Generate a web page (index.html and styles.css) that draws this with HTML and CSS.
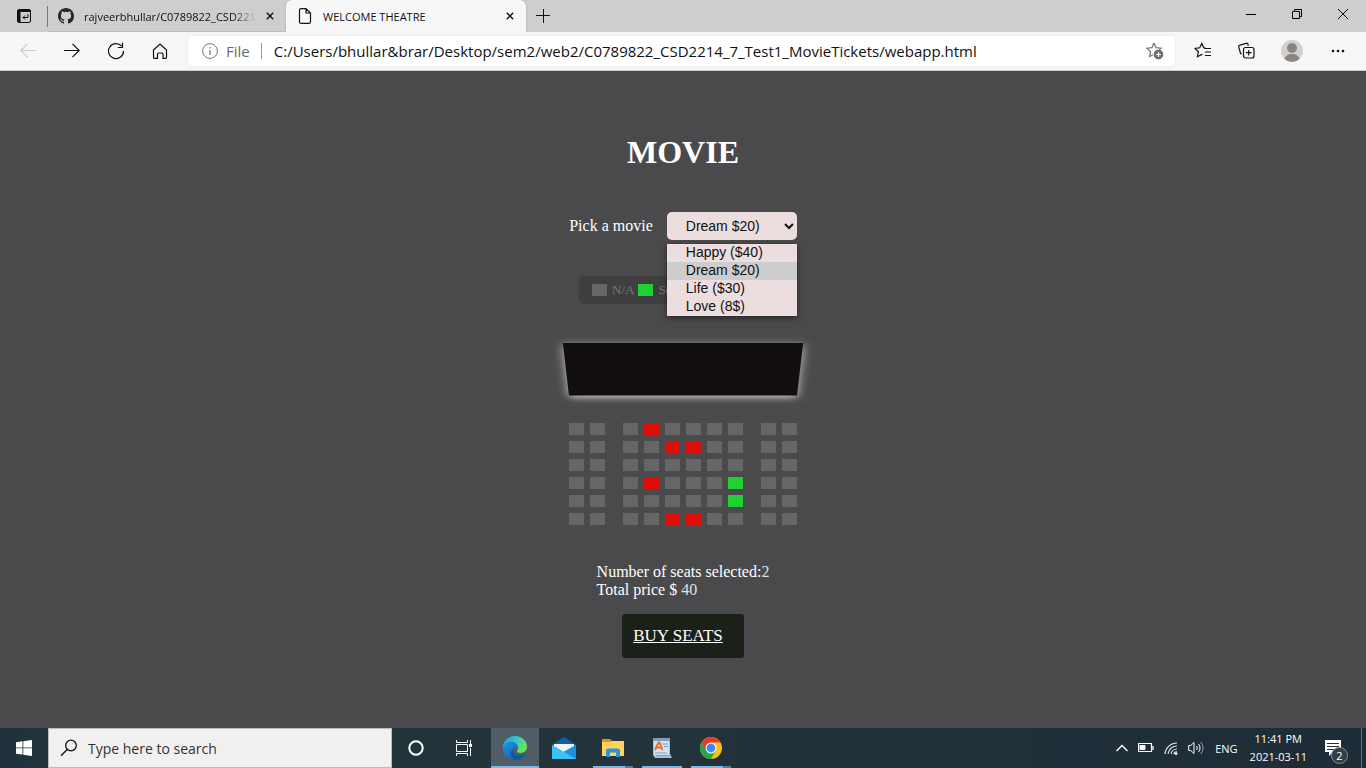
FILE: index.html
```html
<!DOCTYPE html>
<html lang="en">
<head>
<meta charset="utf-8">
<title>WELCOME THEATRE</title>
<link rel="stylesheet" href="styles.css">
</head>
<body>
<header class="browser">
  <div class="tabstrip">
    <button class="tab-actions" aria-label="Tab actions">
      <svg width="16" height="16" viewBox="0 0 16 16" fill="none" stroke="#111"><rect x="1.500" y="1.500" width="13" height="13" rx="1.500"/><path d="M1.500 3h13" stroke-width="2"/><path d="M3 3v11" stroke-width="3"/><path d="M12 6v3.500H7M9 7.500l-2 2 2 2"/></svg>
    </button>
    <div class="tab tab-back">
      <svg class="favicon" width="16" height="16" viewBox="0 0 16 16" fill="#24292e"><path d="M8 0C3.580 0 0 3.580 0 8c0 3.540 2.290 6.530 5.470 7.590.4.070.55-.17.55-.38 0-.19-.01-.82-.01-1.490-2.010.37-2.530-.49-2.690-.94-.09-.23-.48-.94-.82-1.130-.28-.15-.68-.52-.01-.53.63-.01 1.080.58 1.230.82.72 1.210 1.870.87 2.330.66.070-.52.28-.87.51-1.070-1.780-.2-3.640-.89-3.640-3.950 0-.87.31-1.590.82-2.150-.08-.2-.36-1.020.08-2.120 0 0 .67-.21 2.200.82a7.600 7.600 0 0 1 4 0c1.530-1.040 2.200-.82 2.200-.82.44 1.100.16 1.920.08 2.120.51.56.82 1.270.82 2.150 0 3.070-1.870 3.750-3.650 3.950.29.25.54.73.54 1.480 0 1.070-.01 1.930-.01 2.200 0 .21.15.46.55.38A8.010 8.010 0 0 0 16 8c0-4.420-3.580-8-8-8z"/></svg>
      <span class="tab-title tab-title-fade">rajveerbhullar/C0789822_CSD221</span>
      <button class="tab-close" aria-label="Close tab"><svg width="8" height="8" viewBox="0 0 10 10" stroke="#111" stroke-width="1.800"><path d="M1 1l8 8M9 1 1 9"/></svg></button>
    </div>
    <div class="tab tab-active">
      <svg class="favicon" width="16" height="16" viewBox="0 0 16 16" fill="none" stroke="#111" stroke-width="1.200"><path d="M2.500 2A1.500 1.500 0 0 1 4 .6h5L13.500 5v9a1.500 1.500 0 0 1-1.500 1.400H4A1.500 1.500 0 0 1 2.500 14zM9 .6V5h4.500"/></svg>
      <span class="tab-title">WELCOME THEATRE</span>
      <button class="tab-close" aria-label="Close tab"><svg width="8" height="8" viewBox="0 0 10 10" stroke="#111" stroke-width="1.800"><path d="M1 1l8 8M9 1 1 9"/></svg></button>
    </div>
    <button class="new-tab" aria-label="New tab"><svg width="14" height="14" viewBox="0 0 14 14" stroke="#111"><path d="M7.500 0v14M0 6.500h14"/></svg></button>
    <div class="window-controls">
      <button aria-label="Minimize"><svg width="10" height="10" viewBox="0 0 10 10" stroke="#000"><path d="M0 5.500h10"/></svg></button>
      <button aria-label="Restore"><svg width="10" height="10" viewBox="0 0 10 10" fill="none" stroke="#000"><path d="M.5 2.500h7v7h-7zM2.500 2.500v-2h7v7h-2"/></svg></button>
      <button aria-label="Close"><svg width="10" height="10" viewBox="0 0 10 10" stroke="#000"><path d="M0 0l10 10M10 0 0 10"/></svg></button>
    </div>
  </div>
  <div class="toolbar">
    <nav class="tools">
      <button class="tool" aria-label="Back"><svg width="16" height="16" viewBox="0 0 16 16" fill="none" stroke="#ccc" stroke-width="1.200"><path d="M16 7.500H.8M7.500.8.8 7.500l6.700 6.700"/></svg></button>
      <button class="tool" aria-label="Forward"><svg width="16" height="16" viewBox="0 0 16 16" fill="none" stroke="#111" stroke-width="1.200"><path d="M0 7.500h15.200M8.500.8l6.700 6.700-6.700 6.700"/></svg></button>
      <button class="tool" aria-label="Refresh"><svg width="18" height="18" viewBox="0 0 18 18" fill="none" stroke="#111" stroke-width="1.200"><path d="M16.500 9A7.500 7.500 0 1 1 14.500 4M15.500.8v4.700h-4.700"/></svg></button>
      <button class="tool" aria-label="Home"><svg width="16" height="16" viewBox="0 0 16 16" fill="none" stroke="#111" stroke-width="1.200"><path d="M1.500 7 8 1l6.500 6v7.500a.8.8 0 0 1-.8.800H11V11a1 1 0 0 0-1-1H6.500a1 1 0 0 0-1 1v4.300H2.300a.8.8 0 0 1-.8-.8z"/></svg></button>
    </nav>
    <form class="address">
      <svg width="16" height="16" viewBox="0 0 16 16" fill="none" stroke="#767676"><circle cx="8" cy="8" r="7.400"/><path d="M8 7v5M8 4v1.500" stroke-width="1.300"/></svg>
      <label class="scheme" for="url">File</label>
      <input class="url" id="url" type="text" value="C:/Users/bhullar&amp;brar/Desktop/sem2/web2/C0789822_CSD2214_7_Test1_MovieTickets/webapp.html">
      <button class="favorite" type="button" aria-label="Add to favorites"><svg width="18" height="18" viewBox="0 0 18 18" fill="none"><path d="M8 1l2.100 4.600 5 .6-2 2M8 1 5.900 5.600l-5 .6L4.600 9.700l-1 5L7 12.800" stroke="#767676" stroke-width="1.200"/><circle cx="12.500" cy="12.500" r="4.800" fill="#6b6b6b"/><path d="M12.500 10v5M10 12.500h5" stroke="#fff" stroke-width="1.200"/></svg></button>
    </form>
    <div class="tools">
      <button class="tool" aria-label="Favorites"><svg width="18" height="18" viewBox="0 0 18 18" fill="none" stroke="#111" stroke-width="1.200"><path d="M11.500 6 9.700 5.700 7.800 1.500 5.700 5.800 1 6.500l3.400 3.300-1 4.900 4.500-2.300.6.300M10 6.500h7M11 10h6M11 13.500h6"/></svg></button>
      <button class="tool" aria-label="Collections"><svg width="18" height="18" viewBox="0 0 18 18" fill="none" stroke="#111" stroke-width="1.200"><path d="M3.500 12.200 2.500 11.300.8 5A1.600 1.600 0 0 1 1.900 3.100L8.100 1.300a1.600 1.600 0 0 1 1.900 1.100l.3 1.500"/><rect x="5.500" y="5.500" width="10.500" height="10.500" rx="2"/><path d="M10.700 8v5.500M8 10.700h5.500"/></svg></button>
      <button class="tool tool-wide" aria-label="Profile"><svg width="22" height="22" viewBox="0 0 22 22"><circle cx="11" cy="11" r="11" fill="#d2d0ce"/><circle cx="11" cy="8" r="5" fill="#8a8683"/><path d="M3.500 19c.5-3 3.500-5 7.500-5s7 2 7.500 5A11 11 0 0 1 3.500 19z" fill="#8a8683"/></svg></button>
      <button class="tool tool-wide" aria-label="Settings"><svg width="14" height="4" viewBox="0 0 14 4" fill="#111"><circle cx="2" cy="2" r="1.300"/><circle cx="7" cy="2" r="1.300"/><circle cx="12" cy="2" r="1.300"/></svg></button>
    </div>
  </div>
</header>

<main class="page">
  <h1 class="title">MOVIE</h1>
  <div class="picker">
    <label for="movie">Pick a movie</label>
    <div class="picker-field">
      <select id="movie" class="movie-select">
        <option>Happy ($40)</option>
        <option selected>Dream $20)</option>
        <option>Life ($30)</option>
        <option>Love (8$)</option>
      </select>
      <ul class="menu">
        <li>Happy ($40)</li>
        <li class="menu-current">Dream $20)</li>
        <li>Life ($30)</li>
        <li>Love (8$)</li>
      </ul>
    </div>
  </div>
  <ul class="legend">
    <li><span class="swatch"></span>N/A</li>
    <li><span class="swatch selected"></span>Selected</li>
  </ul>
  <div class="stage"><div class="screen"></div></div>
  <div class="seats" id="seats"></div>
  <p class="summary">Number of seats selected:<span>2</span><br>Total price $ <span>40</span></p>
  <a class="buy" href="#buy">BUY SEATS</a>
</main>

<footer class="taskbar">
  <button class="task" aria-label="Start"><svg width="16" height="16" viewBox="0 0 16 16" fill="#fff"><path d="M0 2.200 6.500 1.300v6.200H0zM7.300 1.200 16 0v7.500H7.300zM0 8.300h6.500v6.300L0 13.700zM7.300 8.300H16V16l-8.700-1.200z"/></svg></button>
  <label class="search">
    <svg width="18" height="18" viewBox="0 0 18 18" fill="none" stroke="#111" stroke-width="1.300"><circle cx="11" cy="6.500" r="5.300"/><path d="M7.200 10.500 1 16.700"/></svg>
    <input type="text" placeholder="Type here to search" aria-label="Type here to search">
  </label>
  <button class="task" aria-label="Cortana"><svg width="16" height="16" viewBox="0 0 16 16" fill="none" stroke="#fff" stroke-width="2"><circle cx="8" cy="8" r="6.700"/></svg></button>
  <button class="task" aria-label="Task view"><svg width="16" height="16" viewBox="0 0 16 16" fill="none" stroke="#fff"><path d="M.5 0v2.500h11V0M.5 16v-2.500h11V16M.5 4.500h11v7H.5zM14.500 0v4M14.500 8v8"/><path d="M13 5.500h3" stroke-width="3"/></svg></button>
  <div class="apps">
    <button class="task app app-active" aria-label="Edge">
      <svg width="24" height="24" viewBox="0 0 24 24"><defs><linearGradient id="edgeTop" x1="0" x2="1" y1="0" y2=".4"><stop offset="0" stop-color="#1d9ddc"/><stop offset=".5" stop-color="#33c3cf"/><stop offset="1" stop-color="#69e158"/></linearGradient><linearGradient id="edgeLow" x1="0" x2="1" y1="0" y2="1"><stop offset="0" stop-color="#2496e8"/><stop offset="1" stop-color="#0b4f9e"/></linearGradient></defs><path d="M0 12C0 5 5.500 0 12 0s12 5 12 10.500c0 4-3 6.500-6.500 6.500-3 0-4-1.200-3.300-2.200C16 12 14 8 9.500 7 5 6.500 1.500 9 0 12z" fill="url(#edgeTop)"/><path d="M0 12c1-5 5-6.500 8-6.500 4.500 0 7.500 3.500 7.200 7-.2-2-5.200-2.500-5.500 1.500-.3 4.500 6 7.500 12.600 3.500C20 22 16 24 12 24 5.500 24-.5 19 0 12z" fill="url(#edgeLow)"/><path d="M9.700 13.500c-3 2-3 8.500 3.300 10.500 4 0 7.500-2.500 9.300-6.500-6.300 4-12.600 1-12.600-4z" fill="#0c59a4"/></svg>
      <span class="bar"></span>
    </button>
    <button class="task app" aria-label="Mail"><svg width="24" height="22" viewBox="0 0 24 22"><path d="M0 8 12 0l12 8v14H0z" fill="#0a5fb4"/><path d="M2 7h20v9H2z" fill="#f5f5f5"/><path d="M0 8l12 7.500L24 8v14H0z" fill="#35b3ee"/><path d="M0 22 12 14.500 24 8v14z" fill="#1e93dd"/><path d="M0 8l24 14H0z" fill="#3fc0f5"/></svg></button>
    <button class="task app" aria-label="File Explorer"><svg width="22" height="20" viewBox="0 0 22 20"><path d="M0 1h8l2 2h11v5H0z" fill="#d99a12"/><path d="M0 4h9l1-1h12v15H0z" fill="#ffd35e"/><path d="M4 19v-6.500a2 2 0 0 1 2-2h10a2 2 0 0 1 2 2V19h-4v-4.500H8V19z" fill="#2a94d8"/></svg><span class="bars"><i></i><i></i></span></button>
    <button class="task app" aria-label="WordPad"><svg width="20" height="22" viewBox="0 0 20 22"><path d="M1 2h17v15l2 4H3l-2-3z" fill="#a9c0da"/><path d="M2 3h15v15H2z" fill="#d3e4f5"/><path d="M1 1h17v3H1z" fill="#7f9db8"/><path d="M3 13 6.500 5.500h1L10.500 13M4.500 10.500h5" stroke="#e8711a" stroke-width="2" fill="none"/><path d="M10 7h6M12 9.500h4M3 16h12M4 18.500h13" stroke="#6d9fd3"/></svg><span class="bar bar-inset"></span></button>
    <button class="task app" aria-label="Chrome"><svg width="22" height="22" viewBox="0 0 22 22"><circle cx="11" cy="11" r="11" fill="#fbc116"/><path d="M11 11 1.470 5.500A11 11 0 0 0 11 22l4.800-8.200z" fill="#2ba24c"/><path d="M1.470 5.500A11 11 0 0 1 20.530 5.500H11L6.200 13.800z" fill="#e33b2e"/><circle cx="11" cy="11" r="5.500" fill="#fff"/><circle cx="11" cy="11" r="4.400" fill="#4285f4"/></svg><span class="bars"><i></i><i></i></span></button>
  </div>
  <div class="tray">
    <svg width="12" height="8" viewBox="0 0 12 8" fill="none" stroke="#fff" stroke-width="1.300"><path d="M.5 7 6 1.500 11.500 7"/></svg>
    <svg width="16" height="10" viewBox="0 0 16 10" fill="none" stroke="#fff"><path d="M.5.5h13v8H.5zM15 3v4" stroke-width="1.200"/><path d="M2 2.500h5v4H2z" fill="#fff"/></svg>
    <svg width="14" height="14" viewBox="0 0 14 14" fill="none" stroke="#ddd" stroke-width="1.200"><path d="M1 13A12 12 0 0 1 13 2M4 13a9 9 0 0 1 9-8M7 13a6 6 0 0 1 6-5M9.500 13a4 4 0 0 1 3.500-2.500"/><circle cx="12" cy="12.500" r="1" fill="#fff"/></svg>
    <svg width="17" height="14" viewBox="0 0 17 14" fill="none" stroke="#fff"><path d="M.7 4.500h2L6 1.500v11L2.700 9.500h-2zM8.500 5a3 3 0 0 1 0 4M10.500 3a6 6 0 0 1 0 8"/><path d="M12.700 1a9 9 0 0 1 0 12" stroke="#99a"/></svg>
    <span class="lang">ENG</span>
    <time class="clock">11:41 PM<br>2021-03-11</time>
    <button class="notices" aria-label="Notifications"><svg width="16" height="16" viewBox="0 0 16 16"><path d="M0 0h16v12H8l-4 4v-4H0z" fill="#fff"/><path d="M2 3.500h12M2 6.500h12M2 9.500h7" stroke="#22313a"/></svg><span class="badge">2</span></button>
  </div>
</footer>
<script src="seats.js"></script>
</body>
</html>
```

FILE: seats.js
```js
// n = free, o = occupied, s = selected
const rows = ["nnnonnnnnn", "nnnnoonnnn", "nnnnnnnnnn", "nnnonnnsnn", "nnnnnnnsnn", "nnnnoonnnn"];
const kinds = { n: "free", o: "occupied", s: "selected" };
const seats = document.getElementById("seats");
rows.forEach((row, r) => {
  const line = document.createElement("div");
  line.className = "row";
  [...row].forEach((kind, c) => {
    const seat = document.createElement("button");
    seat.className = "seat " + kinds[kind];
    seat.disabled = kind === "o";
    seat.setAttribute("aria-label", `Row ${r + 1} seat ${c + 1}, ${kinds[kind]}`);
    line.append(seat);
  });
  seats.append(line);
});
```

FILE: styles.css
```css
* { box-sizing: border-box; }
body {
  margin: 0;
  min-height: 100vh;
  display: flex;
  flex-direction: column;
  font-family: "Open Sans", "Noto Sans", sans-serif;
}
button { border: 0; padding: 0; background: none; font: inherit; color: inherit; }
ul { list-style: none; margin: 0; padding: 0; }
svg { flex: none; }

.tabstrip { display: flex; height: 32px; background: #cecece; font-size: 11px; }
.tab-actions { width: 48px; display: grid; place-items: center; position: relative; }
.tab-actions::after { content: ""; position: absolute; right: 0; top: 6px; bottom: 5px; width: 1px; background: #777; }
.tab { display: flex; align-items: center; flex: 0 1 240px; min-width: 0; padding: 0 6px 0 11px; }
.tab-back { flex-basis: 238px; padding-left: 10px; box-shadow: inset 0 -1px #bbb; }
.tab-active { background: #f7f7f7; border-radius: 6px 6px 0 0; box-shadow: 0 0 2px #999; clip-path: inset(0 -3px); }
.favicon { margin-right: 10px; }
.tab-title { flex: 1; min-width: 0; overflow: hidden; white-space: nowrap; color: #111; }
.tab-title-fade { mask-image: linear-gradient(90deg, #000 84%, transparent 98%); }
.tab-close { width: 20px; height: 20px; display: grid; place-items: center; }
.new-tab { width: 34px; display: grid; place-items: center; }
.window-controls { display: flex; margin-left: auto; }
.window-controls button { width: 46px; height: 28px; display: grid; place-items: center; }

.toolbar { display: flex; gap: 6px; height: 39px; padding: 4px 5px 4px 6px; background: #f7f7f7; border-bottom: 1px solid #ccc; }
.tools { display: flex; }
.tool { width: 44px; display: grid; place-items: center; }
.tool-wide { width: 46px; }
.address { flex: 1; display: flex; align-items: center; padding: 0 11px 0 14px; background: #fff; border-radius: 4px; box-shadow: 0 0 3px #e4e4e4; font-size: 15px; }
.scheme { margin-left: 8px; padding-right: 11px; line-height: 16px; color: #6b6b6b; border-right: 1px solid #999; }
.url { flex: 1; min-width: 0; margin-left: 12px; padding: 0; border: 0; outline: 0; background: none; font: inherit; color: #111; }
.favorite { display: grid; }

.page {
  flex: 1;
  display: flex;
  flex-direction: column;
  align-items: center;
  padding: 63px 0 40px;
  background: #4a4a4c;
  color: #fff;
  font: 16px/18px "Liberation Serif", "Times New Roman", serif;
}
.title { margin: 0 0 42px; font-size: 32px; line-height: 36px; }
.picker { display: flex; align-items: center; gap: 14px; margin-bottom: 36px; }
.picker-field { position: relative; width: 130px; font: 14px/16px "Liberation Sans", Arial, sans-serif; }
.movie-select { display: block; width: 100%; height: 28px; padding: 0 0 0 15px; border: 0; border-radius: 5px; background: #ecdede; color: #111; font: inherit; }
.menu { position: absolute; z-index: 2; top: 32px; left: 0; right: 0; background: #ecdede; color: #111; box-shadow: 0 2px 6px rgba(0, 0, 0, .5); }
.menu li { padding: 0 0 2px 19px; }
.menu-current { background: #cdcdcd; }

.legend { display: flex; gap: 4px; width: 208px; height: 28px; padding: 0 13px; align-items: center; border-radius: 5px; background: #3f3f41; color: #777; font-size: 13px; }
.legend li { display: flex; align-items: center; gap: 5px; }
.swatch, .seat { width: 15px; height: 12px; background: #666; }
.swatch.selected, .seat.selected { background: #21d131; }
.seat.occupied { background: #dc0d06; }

.stage { width: 234px; margin: 29px 0 13px; perspective: 1000px; }
.screen { height: 74px; background: #120e0d; transform: rotateX(-45deg); box-shadow: 0 3px 10px rgba(255, 255, 255, .7); }
.row { display: flex; }
.seat { margin: 3px; }
.seat:nth-child(2), .seat:nth-child(8) { margin-right: 15px; }
.summary { margin: 35px 0 15px; }
.summary span { color: #dde3e6; }
.buy { padding: 13px 21px 13px 11px; border-radius: 3px; background: #1b2119; color: #fff; font-size: 17px; }

.taskbar { display: flex; height: 40px; background: linear-gradient(90deg, #20333c, #25343a 45%, #22313a 60%, #1d2c36); color: #fff; }
.task { position: relative; width: 48px; display: grid; place-items: center; }
.search { display: flex; align-items: center; flex: 0 1 344px; gap: 10px; padding: 0 11px; background: #f0f0f0; border: 1px solid #bbb; }
.search input { flex: 1; min-width: 0; padding: 0; border: 0; outline: 0; background: none; font: inherit; font-size: 14px; }
.search input::placeholder { color: #333; opacity: 1; }
.apps { display: flex; gap: 1px; margin-left: 3px; }
.app-active { background: #505d64; }
.bar, .bars { position: absolute; left: 0; right: 0; bottom: 0; height: 2px; background: #76b9ed; }
.bar-inset { left: 4px; right: 4px; }
.bars { left: 4px; right: 4px; display: flex; background: none; }
.bars i { flex: 4; background: #76b9ed; }
.bars i + i { flex: 1; background: #527f9f; }
.tray { display: flex; align-items: center; margin-left: auto; gap: 10px; padding-right: 4px; font-size: 11px; }
.clock { margin-left: 2px; line-height: 18px; text-align: center; }
.notices { position: relative; align-self: stretch; width: 45px; display: flex; align-items: center; padding-left: 8px; border-right: 1px solid #66727a; }
.badge { position: absolute; left: 14px; top: 19px; width: 17px; height: 17px; border: 1px solid #8a9094; border-radius: 50%; background: #333d43; font-size: 11px; line-height: 15px; text-align: center; }
```
